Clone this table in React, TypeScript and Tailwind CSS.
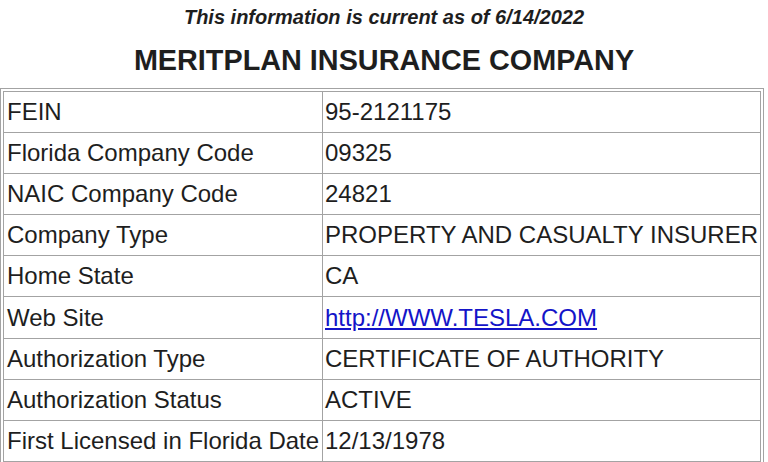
const rows: { label: string; value: string; href?: string }[] = [
  { label: "FEIN", value: "95-2121175" },
  { label: "Florida Company Code", value: "09325" },
  { label: "NAIC Company Code", value: "24821" },
  { label: "Company Type", value: "PROPERTY AND CASUALTY INSURER" },
  { label: "Home State", value: "CA" },
  { label: "Web Site", value: "http://WWW.TESLA.COM", href: "#" },
  { label: "Authorization Type", value: "CERTIFICATE OF AUTHORITY" },
  { label: "Authorization Status", value: "ACTIVE" },
  { label: "First Licensed in Florida Date", value: "12/13/1978" },
];

const App = () => {
  return (
    <div className="w-[768px] h-[462px] overflow-hidden bg-white text-[#1e1e1e] font-['Liberation_Sans',Arial,sans-serif]">
      {/* Header */}
      <p className="pt-[4px] h-[34px] text-center text-[20px] leading-[26px] font-bold italic">
        This information is current as of 6/14/2022
      </p>
      <h1 className="h-[54px] text-center text-[28.8px] leading-[52px] font-bold">
        MERITPLAN INSURANCE COMPANY
      </h1>

      {/* Details table */}
      <div className="w-[764px] border border-[#a3a3a3] p-[2px]">
        <table className="w-full border-collapse text-[24px]">
          <tbody>
            {rows.map((r) => (
              <tr key={r.label} className="h-[41.1px]">
                <td className="w-[319px] border border-[#a3a3a3] pl-[3px] whitespace-nowrap">{r.label}</td>
                <td className="border border-[#a3a3a3] pl-[2px] whitespace-nowrap">
                  {r.href ? (
                    <a href={r.href} className="text-[#1414c8] underline">
                      {r.value}
                    </a>
                  ) : (
                    r.value
                  )}
                </td>
              </tr>
            ))}
          </tbody>
        </table>
      </div>
    </div>
  );
};

export default App;
